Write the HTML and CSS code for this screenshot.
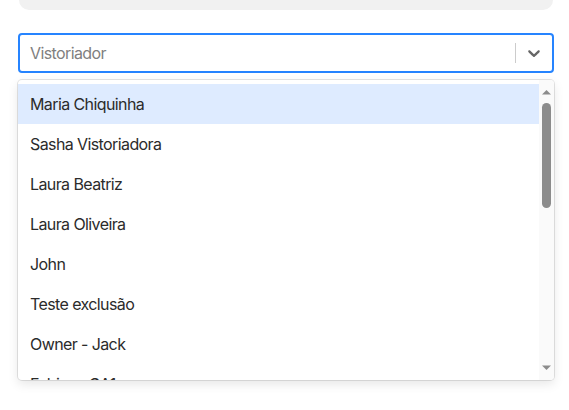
FILE: index.html
```html
<!DOCTYPE html>
<html lang="pt-BR">
<head>
<meta charset="utf-8">
<title>Vistoriador</title>
<link rel="stylesheet" href="styles.css">
</head>
<body>
<div class="page">
  <div class="top-card"></div>
  <div class="select">
    <div class="control">
      <div class="value">
        <span class="placeholder">Vistoriador</span>
      </div>
      <div class="indicators">
        <span class="separator"></span>
        <div class="dropdown-indicator">
          <svg viewBox="0 0 20 20" width="20" height="20" aria-hidden="true"><path d="M4.516 7.548c0.436-0.446 1.043-0.481 1.576 0l3.908 3.747 3.908-3.747c0.533-0.481 1.141-0.446 1.574 0 0.436 0.445 0.408 1.197 0 1.615-0.406 0.418-4.695 4.502-4.695 4.502-0.217 0.223-0.502 0.335-0.787 0.335s-0.57-0.112-0.789-0.335c0 0-4.287-4.084-4.695-4.502s-0.436-1.170 0-1.615z"/></svg>
        </div>
      </div>
    </div>
    <div class="menu">
      <div class="menu-list">
        <div class="option focused">Maria Chiquinha</div>
        <div class="option">Sasha Vistoriadora</div>
        <div class="option">Laura Beatriz</div>
        <div class="option">Laura Oliveira</div>
        <div class="option">John</div>
        <div class="option">Teste exclusão</div>
        <div class="option">Owner - Jack</div>
        <div class="option">Fabiana GA1</div>
      </div>
      <div class="scrollbar" aria-hidden="true">
        <div class="sb-btn">
          <svg width="15" height="20" viewBox="0 0 15 20"><path d="M3 14.5 L7.5 10 L12 14.5 Z"/></svg>
        </div>
        <div class="sb-track">
          <div class="sb-thumb"></div>
        </div>
        <div class="sb-btn">
          <svg width="15" height="20" viewBox="0 0 15 20"><path d="M3 5.5 L12 5.5 L7.5 10 Z"/></svg>
        </div>
      </div>
    </div>
  </div>
</div>
</body>
</html>
```

FILE: styles.css
```css
* { box-sizing: border-box; }
html, body { margin: 0; padding: 0; background: #ffffff; }
body {
  font-family: Inter, "Noto Sans", "Liberation Sans", sans-serif;
  font-size: 16px;
  color: #333333;
}
.page {
  padding: 0 15px 0 18px;
  overflow: hidden;
  height: 410px;
}
.top-card {
  height: 10px;
  margin: 0 1px;
  background: #f1f1f1;
  border-radius: 0 0 12px 12px;
}
.select {
  margin-top: 23px;
}
.control {
  display: flex;
  align-items: center;
  height: 40px;
  border: 2px solid #2684ff;
  border-radius: 4px;
  background: #fff;
}
.value {
  flex: 1;
  padding: 2px 8px 2px 10px;
  min-width: 0;
}
.placeholder {
  color: #808080;
  letter-spacing: -0.6px;
}
.indicators {
  display: flex;
  align-items: center;
  align-self: stretch;
}
.separator {
  width: 1px;
  height: 20px;
  background: #cccccc;
}
.dropdown-indicator {
  display: flex;
  padding: 8px;
  color: #666666;
}
.dropdown-indicator svg { fill: currentColor; }
.menu {
  display: flex;
  height: 300px;
  margin-top: 7px;
  border-radius: 4px;
  background: #fff;
  box-shadow: 0 0 0 1px rgba(0,0,0,0.1), 0 4px 11px rgba(0,0,0,0.1);
  overflow: hidden;
}
.menu-list {
  flex: 1;
  min-width: 0;
  overflow: hidden;
  padding: 4px 0;
}
.option {
  padding: 8px 12px;
  line-height: 24px;
  letter-spacing: -0.6px;
  color: #2b2b2b;
  white-space: nowrap;
}
.option.focused {
  background: #deebff;
}
.scrollbar {
  width: 15px;
  flex: none;
  display: flex;
  flex-direction: column;
  background: #fafafa;
}
.sb-btn {
  height: 20px;
  display: flex;
}
.sb-btn svg { fill: #8c8c8c; }
.sb-track {
  flex: 1;
  padding: 3px 3px;
}
.sb-thumb {
  height: 105px;
  background: #8c8c8c;
  border-radius: 5px;
}
```
